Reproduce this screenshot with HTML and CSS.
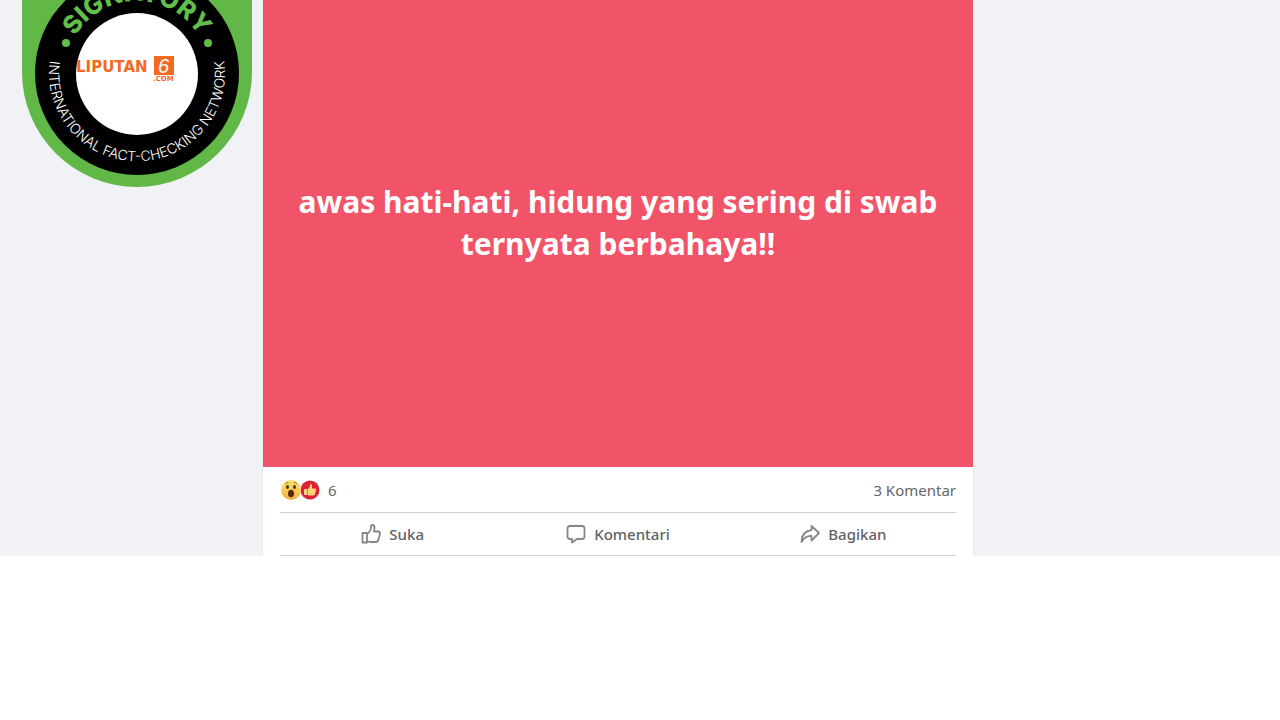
FILE: index.html
```html
<!DOCTYPE html>
<html lang="id">
<head>
    <meta charset="UTF-8">
    <meta name="viewport" content="width=device-width, initial-scale=1.0">
    <title>Cek Fakta</title>
    <link rel="stylesheet" href="styles.css">
</head>
<body>
    <main class="stage">
        <div class="badge">
            <svg class="badge-art" viewBox="22 0 230 188" role="img" aria-label="Signatory, International Fact-Checking Network">
                <defs>
                    <path id="arc-top" d="M65 73 A72 72 0 0 1 209 73"/>
                    <path id="arc-bottom" d="M54 44 A88 88 0 1 0 220 44"/>
                </defs>
                <path d="M22 0 H252 V72 A115 115 0 0 1 22 72 Z" fill="#62b846"/>
                <circle cx="137" cy="73" r="102"/>
                <circle cx="137" cy="74" r="61" fill="#fff"/>
                <circle cx="66" cy="43" r="4" fill="#62c04a"/>
                <circle cx="208" cy="43" r="4" fill="#62c04a"/>
                <text class="badge-title"><textPath href="#arc-top" startOffset="50%">SIGNATORY</textPath></text>
                <text class="badge-network"><textPath href="#arc-bottom" startOffset="50%">INTERNATIONAL FACT-CHECKING NETWORK</textPath></text>
                <!-- publisher logo -->
                <text class="logo-name" x="76" y="72">LIPUTAN</text>
                <rect x="154" y="56" width="20" height="19" fill="#f26a21"/>
                <text class="logo-six" x="158" y="73">6</text>
                <text class="logo-com" x="153" y="81">.COM</text>
            </svg>
        </div>

        <article class="post">
            <p class="post-text">awas hati-hati, hidung yang sering di swab ternyata berbahaya!!</p>
            <div class="post-footer">
                <div class="post-stats">
                    <div class="reactions">
                        <svg width="40" height="20" viewBox="0 0 40 20" aria-hidden="true">
                            <defs>
                                <linearGradient id="wow" x1="0" y1="0" x2="0" y2="1">
                                    <stop offset="0" stop-color="#ffe56a"/>
                                    <stop offset="1" stop-color="#f5ad45"/>
                                </linearGradient>
                            </defs>
                            <circle cx="30" cy="10" r="9.5" fill="#dc2038"/>
                            <path d="M24 9h3.500v6h-3.500z M28 9l2-2.500V4q2-.5 2 2v2.500h3q1.500 0 1 1.500l-1 4q-.5 1.500-2 1.500h-5z" fill="#ffd27a"/>
                            <circle cx="11" cy="10" r="10" fill="url(#wow)"/>
                            <ellipse cx="7.500" cy="7" rx="1.500" ry="2" fill="#4b3a25"/>
                            <ellipse cx="14.500" cy="7" rx="1.500" ry="2" fill="#4b3a25"/>
                            <path d="M5 4q1.500-2 3.500-1.500M13.500 2.500q2-.5 3.500 1.500" fill="none" stroke="#a8702c"/>
                            <ellipse cx="11" cy="13.500" rx="3" ry="3.800" fill="#56280f"/>
                        </svg>
                        <span>6</span>
                    </div>
                    <a class="comment-count" href="#">3 Komentar</a>
                </div>
                <div class="post-actions">
                    <button class="action" type="button">
                        <svg class="icon" viewBox="0 0 20 20" aria-hidden="true">
                            <path d="M1.500 9h4.500v9.500H1.500z M6 10.500L9 7q1-1.500 1-4.500 0-1.500 1.500-1.500 2 0 2 3l-.5 3.500h4q2 0 2 2l-.5 2q0 1.500-.5 2l-.5 2q-.5 2.500-3 2.500H9.500q-2 0-3.500-1"/>
                        </svg>
                        Suka
                    </button>
                    <button class="action" type="button">
                        <svg class="icon" viewBox="0 0 20 20" aria-hidden="true">
                            <path d="M4 2h12q2.500 0 2.500 2.500v8q0 2.500-2.500 2.500h-5l-5 3.500V15H4q-2.500 0-2.500-2.500v-8Q1.500 2 4 2z"/>
                        </svg>
                        Komentari
                    </button>
                    <button class="action" type="button">
                        <svg class="icon" viewBox="0 0 20 20" aria-hidden="true">
                            <path d="M11.500 2l7.500 7-7.500 7.500v-4.500q-6-.5-10 6 0-10.500 10-12z"/>
                        </svg>
                        Bagikan
                    </button>
                </div>
            </div>
        </article>
    </main>
</body>
</html>
```

FILE: styles.css
```css
body {
    margin: 0;
    background-color: #fff;
    font-family: "Noto Sans", "Open Sans", sans-serif;
}
.stage {
    display: grid;
    grid-template-columns: 263px minmax(0, 710px) 1fr;
    background-color: #f0f2f5;
}
.badge {
    padding-left: 22px;
}
.badge-art {
    display: block;
    width: 230px;
}
.badge-title {
    font-family: Inter, sans-serif;
    font-size: 25px;
    font-weight: 800;
    fill: #62c04a;
    text-anchor: middle;
}
.badge-network {
    font-family: Inter, sans-serif;
    font-size: 14px;
    font-weight: 300;
    fill: #fff;
    text-anchor: middle;
}
.logo-name {
    font-family: "DejaVu Sans", sans-serif;
    font-size: 15px;
    font-weight: 700;
    fill: #f26a21;
}
.logo-six {
    font-family: "Liberation Sans", sans-serif;
    font-size: 20px;
    font-style: italic;
    fill: #fff;
}
.logo-com {
    font-family: "DejaVu Sans", sans-serif;
    font-size: 7px;
    font-weight: 700;
    fill: #f26a21;
}
.post {
    background-color: #fff;
    box-shadow: 0 0 2px rgba(0,0,0,0.1);
    clip-path: inset(0 -2px);
}
.post-text {
    margin: 0;
    padding: 181px 32px 202px;
    background-color: #f15468;
    color: #fff;
    font-size: 30px;
    font-weight: 700;
    line-height: 42px;
    text-align: center;
}
.post-footer {
    padding: 0 17px;
    color: #65676b;
    font-size: 15px;
}
.post-stats {
    display: flex;
    align-items: center;
    justify-content: space-between;
    height: 45px;
    border-bottom: 1px solid #ced0d4;
}
.reactions {
    display: flex;
    align-items: center;
    gap: 8px;
}
.comment-count {
    color: inherit;
    text-decoration: none;
}
.post-actions {
    display: grid;
    grid-template-columns: repeat(3, 1fr);
    border-bottom: 1px solid #ced0d4;
}
.action {
    display: flex;
    align-items: center;
    justify-content: center;
    gap: 8px;
    height: 42px;
    padding: 0;
    border: none;
    background: none;
    color: #606266;
    font-family: inherit;
    font-size: 15px;
    font-weight: 500;
    cursor: pointer;
}
.icon {
    width: 20px;
    height: 20px;
    fill: none;
    stroke: #85878b;
    stroke-width: 1.8;
    stroke-linejoin: round;
}
```
